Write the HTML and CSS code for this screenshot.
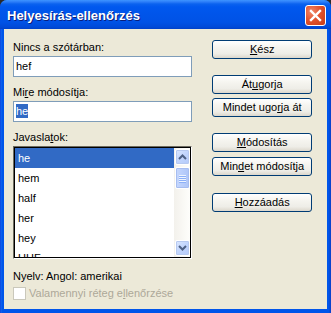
FILE: index.html
```html
<!DOCTYPE html>
<html lang="hu">
<head>
<meta charset="utf-8">
<title>Helyesírás-ellenőrzés</title>
<link rel="stylesheet" href="styles.css">
</head>
<body>
<div class="window">
  <div class="titlebar">
    <span class="title">Helyesírás-ellenőrzés</span>
    <span class="close">
      <svg width="13" height="13" viewBox="0 0 13 13"><path d="M2 2 L11 11 M11 2 L2 11" stroke="#fff" stroke-width="2.4" stroke-linecap="square"/></svg>
    </span>
  </div>
  <div class="client">
    <div class="left">
      <div class="lbl">Nincs a szótárban:</div>
      <div class="input"><span class="val">hef</span></div>
      <div class="lbl gap">Mi<u>r</u>e módosítja:</div>
      <div class="input"><span class="val"><span class="sel">he</span></span></div>
      <div class="lbl gap">Javasla<u>t</u>ok:</div>
      <div class="list">
        <div class="list-inner">
          <div class="items">
            <div class="item active">he</div>
            <div class="item">hem</div>
            <div class="item">half</div>
            <div class="item">her</div>
            <div class="item">hey</div>
            <div class="item">UHF</div>
          </div>
          <div class="scroll">
            <div class="sbtn">
              <svg width="9" height="6" viewBox="0 0 9 6"><path d="M1 5 L4.5 1.5 L8 5" fill="none" stroke="#4d6185" stroke-width="2"/></svg>
            </div>
            <div class="thumb">
              <span class="grip"></span><span class="grip"></span><span class="grip"></span><span class="grip"></span>
            </div>
            <div class="track"></div>
            <div class="sbtn">
              <svg width="9" height="6" viewBox="0 0 9 6"><path d="M1 1 L4.5 4.5 L8 1" fill="none" stroke="#4d6185" stroke-width="2"/></svg>
            </div>
          </div>
        </div>
      </div>
      <div class="lang">Nyelv: Angol: amerikai</div>
      <div class="check"><span class="box"></span><span class="ctext">Valamennyi réteg e<u>l</u>lenőrzése</span></div>
    </div>
    <div class="right">
      <div class="btn"><u>K</u>ész</div>
      <div class="btn g16">Át<u>u</u>gorja</div>
      <div class="btn g4">Mindet ugo<u>r</u>ja át</div>
      <div class="btn g16"><u>M</u>ódosítás</div>
      <div class="btn g5">Min<u>d</u>et módosítja</div>
      <div class="btn g17"><u>H</u>ozzáadás</div>
    </div>
  </div>
</div>
</body>
</html>
```
FILE: styles.css
```css
* { box-sizing: border-box; }
html, body { margin: 0; padding: 0; }
body {
  width: 331px;
  height: 313px;
  background: #2a2a2a;
  font-family: "Liberation Sans", Arial, sans-serif;
  font-size: 11px;
  color: #000;
  overflow: hidden;
}
.window {
  width: 331px;
  height: 313px;
  display: flex;
  flex-direction: column;
  background: linear-gradient(90deg, #0831d9 0, #166aee 1px, #0055ea 2px, #0055ea 329px, #0b44cc 330px);
  border-radius: 7px 7px 0 0;
  overflow: hidden;
}
.titlebar {
  height: 29px;
  flex: none;
  display: flex;
  align-items: flex-start;
  justify-content: space-between;
  padding: 0 5px 0 7px;
  background: linear-gradient(180deg, #3d95ff 0, #2a7cf8 2px, #0a62ef 4px, #0058ee 7px, #0055ea 14px, #0052e6 22px, #004ad8 27px, #0040c8 29px);
}
.title {
  margin-top: 8px;
  font-weight: bold;
  font-size: 13px;
  line-height: 15px;
  color: #fff;
  text-shadow: 1px 1px 0 #0a1e7c;
  letter-spacing: 0;
}
.close {
  margin-top: 5px;
  width: 21px;
  height: 21px;
  border: 1px solid #fff;
  border-radius: 3px;
  background: radial-gradient(circle at 30% 30%, #f0886a 0, #e2532f 45%, #c73b14 100%);
  display: flex;
  align-items: center;
  justify-content: center;
}
.client {
  flex: 1;
  margin: 0 4px 4px 4px;
  background: #ece9d8;
  display: flex;
  padding: 0 15px 0 9px;
  gap: 20px;
}
.left {
  width: 180px;
  padding-top: 12px;
  display: flex;
  flex-direction: column;
}
.lbl {
  line-height: 13px;
  height: 13px;
  margin-bottom: 2px;
}
.lbl.gap { margin-top: 9px; }
.input {
  height: 21px;
  border: 1px solid #7f9db9;
  background: #fff;
  padding: 2px 2px 0 2px;
}
.val {
  display: block;
  line-height: 14px;
  height: 14px;
}
.sel {
  display: inline-block;
  background: #316ac5;
  color: #fff;
  line-height: 14px;
}
.list {
  height: 113px;
  border: 1px solid;
  border-color: #6d6b60 #fff #fff #6d6b60;
}
.list-inner {
  height: 100%;
  border: 1px solid #000;
  background: #fff;
  display: flex;
  overflow: hidden;
}
.items {
  flex: 1;
  overflow: hidden;
}
.item {
  height: 20px;
  line-height: 20px;
  padding-left: 3px;
}
.item.active {
  background: #316ac5;
  color: #fff;
}
.scroll {
  width: 16px;
  flex: none;
  display: flex;
  flex-direction: column;
  padding: 1px 0 0 1px;
  background: linear-gradient(90deg, #f3f1ec, #fefefb);
}
.sbtn {
  height: 16px;
  flex: none;
  border: 1px solid #fff;
  border-radius: 2px;
  background: linear-gradient(135deg, #dce8ff 0, #c1d5fd 50%, #b4cafa 100%);
  box-shadow: 0 0 0 1px #b6c9f0 inset;
  display: flex;
  align-items: center;
  justify-content: center;
  margin-bottom: 1px;
}
.thumb {
  height: 22px;
  flex: none;
  margin-top: 1px;
  border: 1px solid #fff;
  border-radius: 2px;
  background: linear-gradient(90deg, #c6d7fd 0, #b9cefb 50%, #aec5f7 100%);
  box-shadow: 0 0 0 1px #a6bdf0 inset;
  display: flex;
  flex-direction: column;
  align-items: center;
  justify-content: center;
  gap: 1px;
}
.grip {
  display: block;
  width: 7px;
  height: 1px;
  background: #eef4fe;
  box-shadow: 0 1px 0 #8cb0f8;
}
.track { flex: 1; }
.lang {
  margin-top: 11px;
  line-height: 13px;
  height: 13px;
}
.check {
  margin-top: 4px;
  display: flex;
  align-items: flex-start;
  height: 13px;
}
.box {
  width: 13px;
  height: 13px;
  border: 1px solid #cac8bb;
  background: #fff;
  flex: none;
}
.ctext {
  margin-left: 3px;
  line-height: 13px;
  color: #aca899;
}
.right {
  width: 100px;
  padding-top: 11px;
  display: flex;
  flex-direction: column;
}
.btn {
  height: 19px;
  border: 1px solid #003c74;
  border-radius: 3px;
  background: linear-gradient(180deg, #ffffff 0%, #f6f5f0 35%, #eeede7 75%, #dcd7cc 100%);
  text-align: center;
  line-height: 17px;
}
.g16 { margin-top: 16px; }
.g4 { margin-top: 4px; }
.g5 { margin-top: 5px; }
.g17 { margin-top: 17px; }
u { text-decoration: underline; text-underline-offset: 1px; }
```
